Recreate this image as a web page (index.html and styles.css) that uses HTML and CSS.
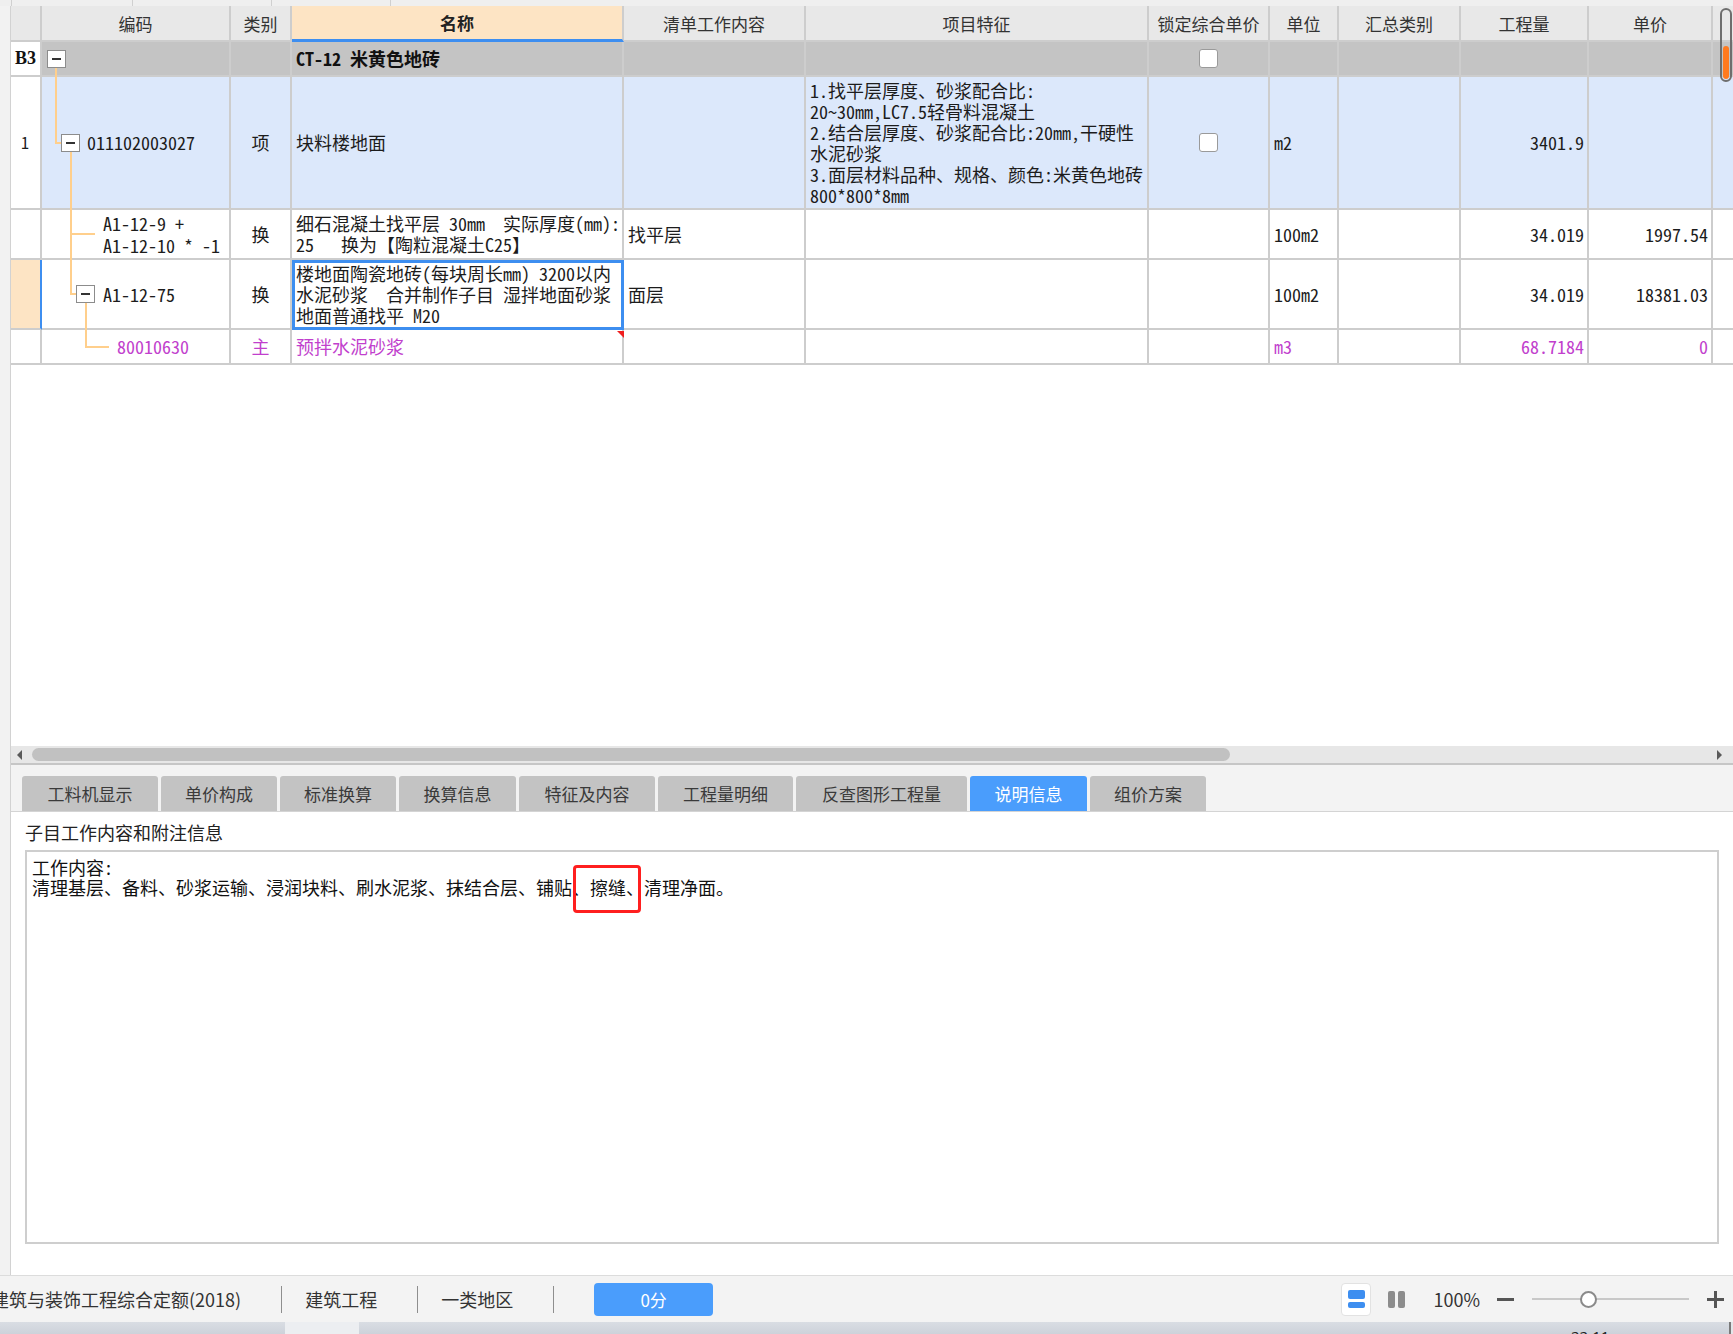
FILE: index.html
```html
<!DOCTYPE html>
<html lang="zh-CN">
<head>
<meta charset="utf-8">
<title>说明信息</title>
<link rel="stylesheet" href="styles.css">
</head>
<body>
<div class="topstrip">
  <div class="seg seg0"></div><div class="seg seg1"></div><div class="seg seg2"></div><div class="seg seg3"></div><div class="seg seg4"></div>
</div>
<div class="main">
  <div class="gutter"></div>
  <div class="panel">
    <div class="gridarea">
      <div class="grid">
        <div class="cell hd"></div>
        <div class="cell hd">编码</div>
        <div class="cell hd">类别</div>
        <div class="cell hd hd-sel">名称</div>
        <div class="cell hd">清单工作内容</div>
        <div class="cell hd">项目特征</div>
        <div class="cell hd">锁定综合单价</div>
        <div class="cell hd">单位</div>
        <div class="cell hd">汇总类别</div>
        <div class="cell hd">工程量</div>
        <div class="cell hd">单价</div>
        <div class="cell hd last"></div>

        <div class="cell rn rn-b3">B3</div>
        <div class="cell grp code code-b3"><span class="minus"></span></div>
        <div class="cell grp"></div>
        <div class="cell grp bold">CT-12 米黄色地砖</div>
        <div class="cell grp"></div>
        <div class="cell grp"></div>
        <div class="cell grp center"><span class="chk"></span></div>
        <div class="cell grp"></div>
        <div class="cell grp"></div>
        <div class="cell grp"></div>
        <div class="cell grp"></div>
        <div class="cell grp last"></div>

        <div class="cell rn rn-1">1</div>
        <div class="cell item code code-1"><span class="minus"></span><span class="codetext">011102003027</span></div>
        <div class="cell item center">项</div>
        <div class="cell item">块料楼地面</div>
        <div class="cell item"></div>
        <div class="cell item"><div class="lines">1.找平层厚度、砂浆配合比:<br>20~30mm,LC7.5轻骨料混凝土<br>2.结合层厚度、砂浆配合比:20mm,干硬性<br>水泥砂浆<br>3.面层材料品种、规格、颜色:米黄色地砖<br>800*800*8mm</div></div>
        <div class="cell item center"><span class="chk"></span></div>
        <div class="cell item">m2</div>
        <div class="cell item"></div>
        <div class="cell item num">3401.9</div>
        <div class="cell item"></div>
        <div class="cell item last"></div>

        <div class="cell rn"></div>
        <div class="cell code code-2"><div class="lines lh22">A1-12-9 +<br>A1-12-10 * -1</div></div>
        <div class="cell center">换</div>
        <div class="cell"><div class="lines">细石混凝土找平层 30mm  实际厚度(mm):<br>25   换为【陶粒混凝土C25】</div></div>
        <div class="cell">找平层</div>
        <div class="cell"></div>
        <div class="cell"></div>
        <div class="cell">100m2</div>
        <div class="cell"></div>
        <div class="cell num">34.019</div>
        <div class="cell num">1997.54</div>
        <div class="cell last"></div>

        <div class="cell rn rn-cur"></div>
        <div class="cell code code-3"><span class="minus"></span><span class="codetext">A1-12-75</span></div>
        <div class="cell center">换</div>
        <div class="cell selected"><div class="lines">楼地面陶瓷地砖(每块周长mm) 3200以内<br>水泥砂浆  合并制作子目 湿拌地面砂浆<br>地面普通找平 M20</div></div>
        <div class="cell">面层</div>
        <div class="cell"></div>
        <div class="cell"></div>
        <div class="cell">100m2</div>
        <div class="cell"></div>
        <div class="cell num">34.019</div>
        <div class="cell num">18381.03</div>
        <div class="cell last"></div>

        <div class="cell rn"></div>
        <div class="cell code code-4 purple">80010630</div>
        <div class="cell center purple">主</div>
        <div class="cell purple note">预拌水泥砂浆</div>
        <div class="cell"></div>
        <div class="cell"></div>
        <div class="cell"></div>
        <div class="cell purple">m3</div>
        <div class="cell"></div>
        <div class="cell num purple">68.7184</div>
        <div class="cell num purple">0</div>
        <div class="cell last"></div>
      </div>

      <svg class="tree" width="120" height="370" viewBox="0 0 120 370">
        <g fill="none" stroke="#ffcf8c" stroke-width="2">
          <polyline points="45,62 45,137 50,137"/>
          <polyline points="60,146 60,288 65,288"/>
          <polyline points="60,228 84,228"/>
          <polyline points="75,297 75,341 98,341"/>
        </g>
      </svg>

      <div class="vscroll"><div class="vthumb"></div></div>
    </div>

    <div class="hscroll">
      <span class="arrow arrow-l"></span>
      <div class="hthumb"></div>
      <span class="arrow arrow-r"></span>
    </div>

    <div class="tabbar">
      <div class="tab w136">工料机显示</div>
      <div class="tab w116">单价构成</div>
      <div class="tab w116">标准换算</div>
      <div class="tab w117">换算信息</div>
      <div class="tab w136">特征及内容</div>
      <div class="tab w135">工程量明细</div>
      <div class="tab w171">反查图形工程量</div>
      <div class="tab w117 active">说明信息</div>
      <div class="tab w116">组价方案</div>
    </div>

    <div class="info">
      <div class="info-label">子目工作内容和附注信息</div>
      <div class="info-box">工作内容:<br>清理基层、备料、砂浆运输、浸润块料、刷水泥浆、抹结合层、铺贴、<span class="mark">擦缝</span>、清理净面。</div>
    </div>
  </div>
</div>

<div class="status">
  <div class="st-left">
    <span class="st-text st-first">建筑与装饰工程综合定额(2018)</span>
    <span class="sep"></span>
    <span class="st-text">建筑工程</span>
    <span class="sep"></span>
    <span class="st-text">一类地区</span>
    <span class="sep"></span>
    <span class="score">0分</span>
  </div>
  <div class="st-right">
    <span class="view view-on"><span class="vb vb1"></span><span class="vb vb2"></span></span>
    <span class="view2"><span class="bar"></span><span class="bar"></span></span>
    <span class="zoomtxt">100%</span>
    <span class="zminus"></span>
    <span class="slider"><span class="knob"></span></span>
    <span class="zplus"></span>
  </div>
</div>
<div class="taskbar">
  <div class="tb-a"></div>
  <div class="tb-b"></div>
  <div class="tb-c"><span class="clock">22:11</span></div>
  <div class="tb-d"></div>
</div>
</body>
</html>
```

FILE: styles.css
```css
* { box-sizing: border-box; }
html, body { margin: 0; padding: 0; }
body {
  width: 1733px;
  height: 1334px;
  overflow: hidden;
  background: #f3f3f3;
  font-family: "Noto Sans CJK SC", "Noto Sans", sans-serif;
  color: #222;
}

/* top strip */
.topstrip { height: 6px; display: flex; background: #efefef; }
.seg { border-left: 1px solid #d0d0d0; height: 6px; }
.seg0 { width: 11px; border-left: none; }
.seg1 { width: 121px; }
.seg2 { width: 139px; }
.seg3 { width: 119px; }
.seg4 { flex: 1; }

/* main */
.main { display: flex; height: 1269px; }
.gutter { width: 11px; background: #f2f2f2; border-right: 1px solid #d2d2d2; }
.panel { flex: 1; display: flex; flex-direction: column; background: #fff; min-width: 0; }

.gridarea { position: relative; height: 740px; background: #fff; overflow: hidden; }

.grid {
  display: grid;
  grid-template-columns: 31px 189px 61px 332px 182px 343px 121px 69px 122px 128px 124px 20px;
  grid-template-rows: 36px 35px 133px 50px 70px 35px;
  font-family: "Noto Sans Mono CJK SC", "Noto Sans CJK SC", monospace;
  font-size: 18px;
  line-height: 21px;
  color: #1c1c1c;
}
.cell {
  display: flex;
  align-items: center;
  padding: 0 4px;
  border-right: 2px solid #cdcdcd;
  border-bottom: 2px solid #cdcdcd;
  white-space: pre;
  overflow: hidden;
  min-width: 0;
}
.cell.last { border-right: none; }
.center { justify-content: center; }
.num { justify-content: flex-end; padding-right: 3px; }
.lines { white-space: pre; }
.lh22 { line-height: 22px; }

.hd {
  background: #e8e8e8;
  justify-content: center;
  font-family: "Noto Sans CJK SC", sans-serif;
  font-size: 17px;
  color: #333;
  padding: 0;
}
.hd-sel { background: #fde4c4; font-weight: bold; color: #222; border-bottom: 3px solid #3d8ef0; }

.rn { background: #fff; padding-left: 4px; }
.rn-b3 { font-family: "Liberation Serif", serif; font-weight: bold; font-size: 18px; color: #111; }
.rn-1 { padding-left: 10px; font-size: 16px; }
.rn-cur { background: #fde4c4; border-right-color: #3d8ef0; }

.grp { background: #c4c4c4; }
.item { background: #dce8fb; }
.bold { font-weight: bold; color: #111; }
.purple { color: #c13fcd; }

.code { padding-left: 5px; }
.code-1 { padding-left: 19px; }
.code-2 { padding-left: 61px; }
.code-3 { padding-left: 34px; }
.code-4 { padding-left: 75px; }
.codetext { margin-left: 7px; }
.code-3 .codetext { margin-left: 8px; }

.minus {
  flex: none;
  width: 19px;
  height: 18px;
  background: #fff;
  border: 1px solid #8c8c8c;
  display: flex;
  align-items: center;
  justify-content: center;
}
.minus::before { content: ""; width: 9px; height: 2px; background: #333; }

.chk {
  width: 19px;
  height: 19px;
  background: #fff;
  border: 1px solid #9a9a9a;
  border-radius: 3px;
}

.selected { outline: 3px solid #3d8ef0; outline-offset: -3px; position: relative; }
.note { position: relative; overflow: visible; }
.note::after {
  content: "";
  position: absolute;
  top: 1px;
  right: -2px;
  border-top: 7px solid #f01e1e;
  border-left: 7px solid transparent;
}

.tree { position: absolute; left: 0; top: 0; pointer-events: none; }

.vscroll {
  position: absolute;
  left: 1709px;
  top: 2px;
  width: 12px;
  height: 74px;
  border: 2px solid #6e6e6e;
  border-radius: 6px;
  display: flex;
  flex-direction: column;
  justify-content: flex-end;
  align-items: center;
  padding: 1px 0;
  background: transparent;
}
.vthumb { width: 6px; height: 33px; background: #ff7a1f; border-radius: 3px; }

/* horizontal scrollbar */
.hscroll {
  height: 19px;
  background: #e7e7e7;
  border-bottom: 2px solid #c6c6c6;
  display: flex;
  align-items: center;
  padding: 0 11px 0 6px;
}
.arrow { width: 0; height: 0; border-top: 5px solid transparent; border-bottom: 5px solid transparent; }
.arrow-l { border-right: 5px solid #5a5a5a; }
.arrow-r { border-left: 5px solid #5a5a5a; margin-left: auto; }
.hthumb { width: 1198px; height: 13px; background: #c1c1c1; border-radius: 7px; margin-left: 10px; }

/* tabs */
.tabbar {
  height: 47px;
  padding: 11px 0 0 11px;
  display: flex;
  gap: 3px;
  background: #f3f3f3;
  border-bottom: 1px solid #d4d4d4;
}
.tab {
  height: 35px;
  background: #c3c3c3;
  border-radius: 3px 3px 0 0;
  display: flex;
  align-items: center;
  justify-content: center;
  font-size: 17px;
  color: #3a3a3a;
}
.tab.active { background: #4a9dfc; color: #fff; }
.w116 { width: 116px; }
.w117 { width: 117px; }
.w135 { width: 135px; }
.w136 { width: 136px; }
.w171 { width: 171px; }

/* info */
.info { flex: 1; padding: 8px 14px 0 14px; background: #fff; }
.info-label { font-size: 18px; line-height: 24px; color: #222; padding-left: 0; }
.info-box {
  margin-top: 6px;
  height: 394px;
  border: 2px solid #cecece;
  padding: 5px 5px;
  font-family: "Noto Sans Mono CJK SC", "Noto Sans CJK SC", monospace;
  font-size: 18px;
  line-height: 20px;
  color: #111;
}
.mark { position: relative; }
.mark::after {
  content: "";
  position: absolute;
  left: -17px;
  right: -15px;
  top: -9px;
  bottom: -13px;
  border: 3px solid #ff1f1f;
  border-radius: 4px;
}

/* status bar */
.status {
  height: 47px;
  border-top: 1px solid #dcdcdc;
  background: #f3f3f3;
  display: flex;
  align-items: center;
  font-size: 18px;
  color: #333;
  overflow: hidden;
}
.st-left { display: flex; align-items: center; }
.st-text { white-space: nowrap; }
.st-first { margin-left: -9px; }
.sep { width: 1px; height: 27px; background: #8e8e8e; margin: 0 23px 0 40px; }
.score {
  width: 119px;
  height: 33px;
  background: #4a9dfc;
  color: #fff;
  border-radius: 4px;
  display: flex;
  align-items: center;
  justify-content: center;
  font-size: 17px;
  margin-left: 17px;
}
.st-right { margin-left: auto; display: flex; align-items: center; padding-right: 9px; }
.view {
  width: 30px;
  height: 33px;
  background: #fff;
  border: 1px solid #e2e2e2;
  border-radius: 4px;
  display: flex;
  flex-direction: column;
  align-items: center;
  justify-content: center;
  gap: 3px;
}
.vb { width: 17px; background: #3d8ef0; border-radius: 2px; }
.vb1 { height: 9px; }
.vb2 { height: 6px; }
.view2 { display: flex; gap: 3px; margin-left: 17px; }
.bar { width: 7px; height: 17px; background: #8c8c8c; border-radius: 2px; }
.zoomtxt { margin-left: 28px; font-size: 18px; color: #333; }
.zminus { width: 17px; height: 3px; background: #555; margin-left: 17px; }
.slider {
  width: 157px;
  height: 2px;
  background: #c8c8c8;
  margin-left: 18px;
  display: flex;
  align-items: center;
  justify-content: flex-start;
}
.knob {
  width: 17px;
  height: 17px;
  border-radius: 50%;
  background: #fff;
  border: 2px solid #8a8a8a;
  flex: none;
  margin-left: 48px;
}
.zplus { width: 17px; height: 17px; margin-left: 18px; position: relative; display: flex; align-items: center; justify-content: center; }
.zplus::before { content: ""; width: 17px; height: 3px; background: #555; }
.zplus::after { content: ""; position: absolute; left: 7px; top: 0; width: 3px; height: 17px; background: #555; }

/* taskbar */
.taskbar { height: 12px; display: flex; background: linear-gradient(#d9dde3, #cdd2da); overflow: hidden; }
.tb-a { width: 285px; }
.tb-b { width: 74px; background: #eceef1; }
.tb-c { flex: 1; position: relative; overflow: hidden; }
.clock { position: absolute; left: 1212px; top: 5px; font-size: 15px; line-height: 18px; color: #222; font-family: "Noto Sans", sans-serif; }
.tb-d { width: 4px; border-left: 2px solid #7a7a7a; background: #e4e6ea; }
```
